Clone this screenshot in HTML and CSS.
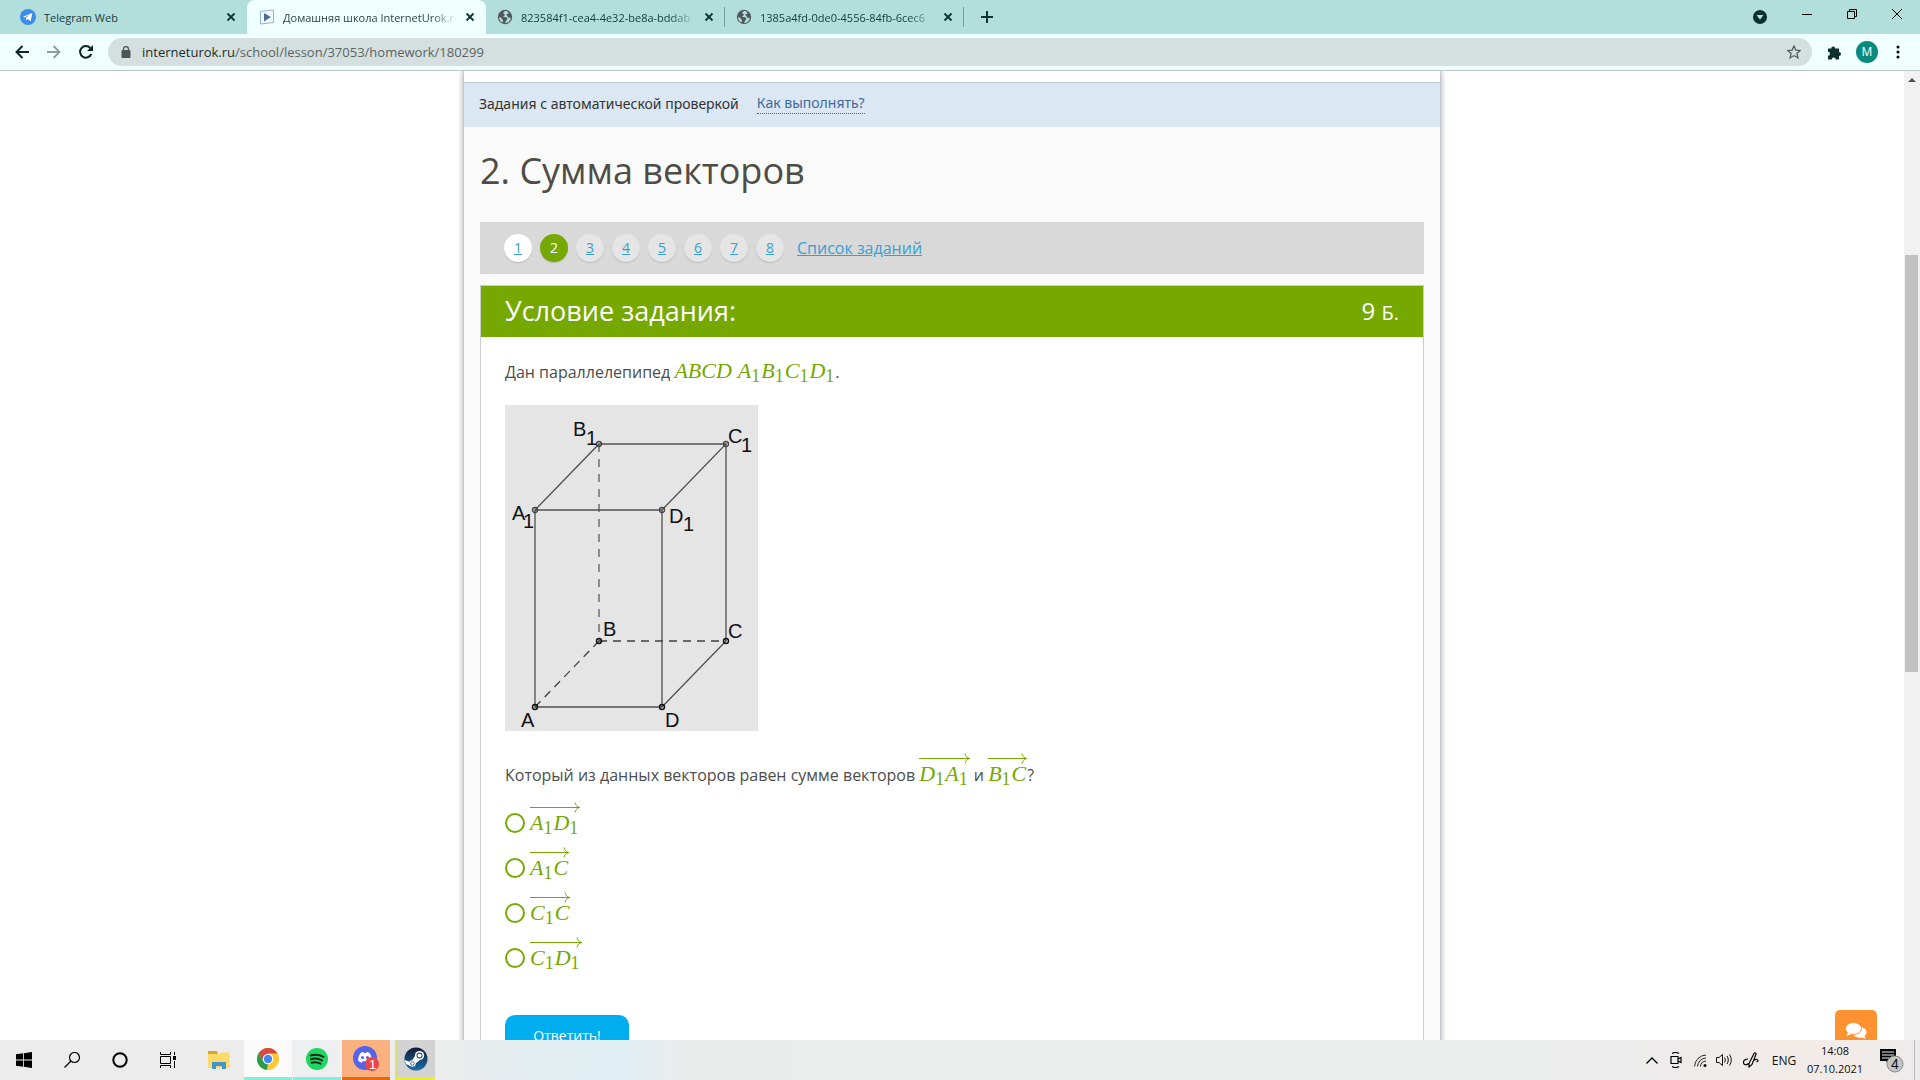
FILE: index.html
```html
<!DOCTYPE html>
<html lang="ru">
<head>
<meta charset="utf-8">
<title>Домашняя школа InternetUrok.ru</title>
<link rel="stylesheet" href="styles.css">
</head>
<body>
<svg width="0" height="0" class="defs" aria-hidden="true">
  <symbol id="close" viewBox="0 0 10 10"><path d="M1.5 1.5l7 7M8.500 1.500l-7 7" stroke="#0d3432" stroke-width="1.800" fill="none"/></symbol>
  <symbol id="globe" viewBox="0 0 16 16"><circle cx="8" cy="8" r="7.200" fill="#50585a"/><path d="M8.500 1.800c-1 1-2.500 1-2 2.400.3.900 1.500.6 1.300 1.800-.2 1-1.500.9-1.500 2 1.500.3 3.500-.3 4 1.300.3 1.200-1 1.500-1.200 2.500-.2.900-.6 1.600-1.400 2.300a6 6 0 0 0 6.200-5.300c-1-.2-1.800.4-2.700-.3-.9-.8-.3-1.700-1.200-2.100-.7-.3-.9-1 0-1.300.9-.2 1.300-.6 1.600-1.400a6 6 0 0 0-3.100-1.900zM2 8.200c1.300 0 2.300.4 2.600 1.400.3 1 1.500 1 1.300 2.200l-.2 1.700A6 6 0 0 1 2 8.200z" fill="#b2dfdc"/></symbol>
  <symbol id="head" viewBox="0 0 6 11"><path d="M1 0.500c.5 2.500 2 4.300 4.500 5-2.500.7-4 2.500-4.500 5" fill="none" stroke="#75a800"/></symbol>
</svg>

<header class="browser">
  <div class="tabs">
    <div class="tab tab-first">
      <svg class="fav" viewBox="0 0 16 16"><circle cx="8" cy="8" r="8" fill="#3b8de8"/><path d="M3 7.800l9.300-3.800-1.600 8.300-3-2.200-1.500 1.400-.3-2.400 4-3.600-5 3.100z" fill="#fff"/></svg>
      <span class="tab-name">Telegram Web</span>
      <button class="icon-btn" aria-label="Закрыть"><svg width="10" height="10"><use href="#close"/></svg></button>
    </div>
    <div class="tab tab-active">
      <svg class="fav" viewBox="0 0 16 16"><path d="M1.500 2.500l13-1.500v12.500l-13 1.500z" fill="#f6fbff" stroke="#8fb4d6"/><path d="M5 4l7 4-7 4.500z" fill="#4a6d9c"/></svg>
      <span class="tab-name fade">Домашняя школа InternetUrok.r</span>
      <button class="icon-btn" aria-label="Закрыть"><svg width="10" height="10"><use href="#close"/></svg></button>
    </div>
    <div class="tab tab-sep">
      <svg class="fav"><use href="#globe"/></svg>
      <span class="tab-name fade">823584f1-cea4-4e32-be8a-bddab</span>
      <button class="icon-btn" aria-label="Закрыть"><svg width="10" height="10"><use href="#close"/></svg></button>
    </div>
    <div class="tab tab-sep">
      <svg class="fav"><use href="#globe"/></svg>
      <span class="tab-name fade">1385a4fd-0de0-4556-84fb-6cec6</span>
      <button class="icon-btn" aria-label="Закрыть"><svg width="10" height="10"><use href="#close"/></svg></button>
    </div>
    <button class="icon-btn new-tab" aria-label="Новая вкладка"><svg width="12" height="12" viewBox="0 0 12 12"><path d="M6 0v12M0 6h12" stroke="#0d3432" stroke-width="2"/></svg></button>
    <div class="window-btns">
      <button class="icon-btn" aria-label="Поиск вкладок"><svg width="14" height="14" viewBox="0 0 14 14"><circle cx="7" cy="7" r="7" fill="#0d2f2e"/><path d="M3.500 5h7L7 9.800z" fill="#b2dfdc"/></svg></button>
      <button class="icon-btn raised" aria-label="Свернуть"><svg width="10" height="10" viewBox="0 0 10 10"><path d="M0 5.500h10" stroke="#000"/></svg></button>
      <button class="icon-btn raised" aria-label="Развернуть"><svg width="10" height="10" viewBox="0 0 10 10"><path d="M.5 2.500h7v7h-7zM2.500 2.500v-2h7v7h-2" fill="none" stroke="#000"/></svg></button>
      <button class="icon-btn raised" aria-label="Закрыть окно"><svg width="10" height="10" viewBox="0 0 10 10"><path d="M0 0l10 10M10 0L0 10" stroke="#000"/></svg></button>
    </div>
  </div>
  <div class="toolbar">
    <button class="icon-btn" aria-label="Назад"><svg width="14" height="14" viewBox="0 0 14 14"><path d="M14 7H1.500M7.500 1l-6 6 6 6" fill="none" stroke="#0d2523" stroke-width="2"/></svg></button>
    <button class="icon-btn" aria-label="Вперёд"><svg width="14" height="14" viewBox="0 0 14 14"><path d="M0 7h12.500M6.500 1l6 6-6 6" fill="none" stroke="#8d9c9b" stroke-width="1.800"/></svg></button>
    <button class="icon-btn" aria-label="Обновить"><svg width="14" height="14" viewBox="0 0 14 14"><path d="M12.300 9A5.800 5.800 0 1 1 11.300 3" fill="none" stroke="#0d2523" stroke-width="2"/><path d="M14 0v6H8z" fill="#0d2523"/></svg></button>
    <div class="address">
      <svg width="10" height="12" viewBox="0 0 10 12"><rect x="0.500" y="4" width="9" height="8" rx="1" fill="#4d5655"/><path d="M2.500 5V3a2.500 2.500 0 0 1 5 0v2" fill="none" stroke="#4d5655" stroke-width="1.300"/></svg>
      <span class="url"><b>interneturok.ru</b>/school/lesson/37053/homework/180299</span>
      <button class="icon-btn" aria-label="В закладки"><svg width="14" height="14" viewBox="0 0 14 14"><path d="M7 1l1.800 4.100 4.400.4-3.300 3 1 4.400L7 10.600l-3.900 2.300 1-4.400-3.300-3 4.400-.4z" fill="none" stroke="#4d5655" stroke-width="1.200"/></svg></button>
    </div>
    <div class="actions">
      <button class="icon-btn" aria-label="Расширения"><svg width="15" height="15" viewBox="0 0 15 15"><path d="M1 3.500h3.200a2 2 0 1 1 4 0H12v3.600a2 2 0 1 1 0 4V14.500H8.700a2 2 0 1 0-4 0H1v-3.700a2 2 0 1 0 0-4z" fill="#0d2f2e"/></svg></button>
      <button class="avatar">M</button>
      <button class="icon-btn" aria-label="Меню"><svg width="4" height="14" viewBox="0 0 4 14"><circle cx="2" cy="2" r="1.500"/><circle cx="2" cy="7" r="1.500"/><circle cx="2" cy="12" r="1.500"/></svg></button>
    </div>
  </div>
</header>

<div class="viewport">
  <main class="page">
    <div class="notice"><span>Задания с автоматической проверкой</span><a href="#">Как выполнять?</a></div>
    <h1>2. Сумма векторов</h1>
    <nav class="steps">
      <a class="step done" href="#">1</a><a class="step current" href="#">2</a><a class="step" href="#">3</a><a class="step" href="#">4</a><a class="step" href="#">5</a><a class="step" href="#">6</a><a class="step" href="#">7</a><a class="step" href="#">8</a>
      <a class="list-link" href="#">Список заданий</a>
    </nav>
    <section class="card">
      <div class="card-head"><h2>Условие задания:</h2><span class="points">9 <small>Б.</small></span></div>
      <form class="card-body">
        <p>Дан параллелепипед <i class="m">ABCD<span class="sp"></span>A<sub>1</sub>B<sub>1</sub>C<sub>1</sub>D<sub>1</sub></i>.</p>
        <svg class="figure" width="253" height="326" viewBox="0 0 253 326" role="img" aria-label="Параллелепипед">
          <rect width="253" height="326" fill="#e5e5e5"/>
          <path d="M30 105L94 39H221L157 105ZM30 105V302H157V105M157 302L221 236V39" fill="none" stroke="#505050" stroke-width="1.300"/>
          <path d="M94 39V236" fill="none" stroke="#505050" stroke-width="1.200" stroke-dasharray="8 7"/>
          <path d="M94 236H221M94 236L30 302" fill="none" stroke="#404040" stroke-width="1.300" stroke-dasharray="8 6"/>
          <g fill="none" stroke="#444" stroke-width="1.300"><circle cx="30" cy="105" r="2.500"/><circle cx="94" cy="39" r="2.500"/><circle cx="221" cy="39" r="2.500"/><circle cx="157" cy="105" r="2.500"/></g>
          <g fill="none" stroke="#111" stroke-width="1.400"><circle cx="30" cy="302" r="2.500"/><circle cx="94" cy="236" r="2.500"/><circle cx="221" cy="236" r="2.500"/><circle cx="157" cy="302" r="2.500"/></g>
          <g class="fig-text">
            <text x="68" y="31">B</text><text x="81" y="40">1</text>
            <text x="223" y="38">C</text><text x="236" y="47">1</text>
            <text x="7" y="115">A</text><text x="18" y="123">1</text>
            <text x="164" y="118">D</text><text x="178" y="126">1</text>
            <text x="98" y="231">B</text><text x="223" y="233">C</text>
            <text x="16" y="322">A</text><text x="160" y="322">D</text>
          </g>
        </svg>
        <p class="question">Который из данных векторов равен сумме векторов <span class="vec"><span class="arrow"><svg width="6" height="11"><use href="#head"/></svg></span><i class="m">D<sub>1</sub>A<sub>1</sub></i></span> и <span class="vec"><span class="arrow"><svg width="6" height="11"><use href="#head"/></svg></span><i class="m">B<sub>1</sub>C</i></span>?</p>
        <div class="options">
          <label><input type="radio" name="v"><span class="vec"><span class="arrow"><svg width="6" height="11"><use href="#head"/></svg></span><i class="m">A<sub>1</sub>D<sub>1</sub></i></span></label>
          <label><input type="radio" name="v"><span class="vec"><span class="arrow"><svg width="6" height="11"><use href="#head"/></svg></span><i class="m">A<sub>1</sub>C</i></span></label>
          <label><input type="radio" name="v"><span class="vec"><span class="arrow"><svg width="6" height="11"><use href="#head"/></svg></span><i class="m">C<sub>1</sub>C</i></span></label>
          <label><input type="radio" name="v"><span class="vec"><span class="arrow"><svg width="6" height="11"><use href="#head"/></svg></span><i class="m">C<sub>1</sub>D<sub>1</sub></i></span></label>
        </div>
        <button class="submit" type="button">Ответить!</button>
      </form>
    </section>
  </main>
  <div class="scrollbar"><svg width="16" height="17" viewBox="0 0 16 17"><path d="M4 11l4-4 4 4z" fill="#505050"/></svg><div class="thumb"></div></div>
  <button class="chat" aria-label="Чат"><svg width="22" height="18" viewBox="0 0 22 18"><path d="M14 5c5 0 7.500 2.500 7.500 5.300 0 1.500-.8 2.900-2 3.900l1.300 2.800-4-1.500c-4.500.8-8.300-1-8.800-4z" fill="#fff"/><ellipse cx="8.500" cy="6.500" rx="8" ry="6" fill="#fff" stroke="#ff9230"/><path d="M3 10l-1.500 4 5-2z" fill="#fff"/></svg></button>
</div>

<footer class="taskbar">
  <button class="task" aria-label="Пуск"><svg width="16" height="16" viewBox="0 0 16 16"><path d="M0 2.300l7-1V7.600H0zM7.800 1.200L16 0v7.600H7.800zM0 8.400h7v6.300l-7-1zM7.800 8.400H16V16l-8.200-1.200z"/></svg></button>
  <button class="task" aria-label="Поиск"><svg width="16" height="16" viewBox="0 0 16 16"><circle cx="10.500" cy="5.500" r="5" fill="none" stroke="#000" stroke-width="1.200"/><path d="M7 9L.5 15.500" stroke="#000" stroke-width="1.300"/></svg></button>
  <button class="task" aria-label="Кортана"><svg width="16" height="16" viewBox="0 0 16 16"><circle cx="8" cy="8" r="6.700" fill="none" stroke="#000" stroke-width="2"/></svg></button>
  <button class="task" aria-label="Представление задач"><svg width="16" height="16" viewBox="0 0 16 16"><path d="M.5 0v2.500h10V0M.5 16v-2.500h10V16M.5 4.500h10v7H.5zM14.500 0v3M14.500 9v7" fill="none" stroke="#000"/><path d="M13 4h3v4h-3z"/></svg></button>
  <div class="pinned">
    <button class="task" aria-label="Проводник"><svg width="22" height="18" viewBox="0 0 22 18"><path d="M0 0h9l1 3H0z" fill="#d8a72d"/><path d="M0 3h11l2-1.500h8.500V17H0z" fill="#ffd969"/><path d="M4 18v-7h14v7h-4v-3H8v3z" fill="#3f93cf"/></svg></button>
    <button class="task t-chrome" aria-label="Chrome"><svg width="22" height="22" viewBox="0 0 22 22"><circle cx="11" cy="11" r="11" fill="#fcc934"/><path d="M11 11L6.700 13.500 1.500 5.500A11 11 0 0 1 20.500 5.500H11z" fill="#d34a3f"/><path d="M1.500 5.500l5.200 8L11 16l-1.200 6A11 11 0 0 1 1.500 5.500z" fill="#2a9d50"/><circle cx="11" cy="11" r="5.300" fill="#fff"/><circle cx="11" cy="11" r="4.200" fill="#4285f4"/></svg></button>
    <button class="task t-spotify" aria-label="Spotify"><svg width="22" height="22" viewBox="0 0 22 22"><circle cx="11" cy="11" r="11" fill="#1ed760"/><path d="M4.500 7.500c4.500-1.300 9-.9 13 1.300M5 11.200c4-1.200 7.700-.7 11 1.200M5.500 14.700c3.200-.9 6.300-.5 9 1" fill="none" stroke="#10291a" stroke-width="2" stroke-linecap="round"/></svg></button>
    <button class="task t-discord" aria-label="Discord"><svg width="26" height="25" viewBox="0 0 26 25"><circle cx="12" cy="12" r="12" fill="#5562ea"/><path d="M7.500 7c1-.5 2-.8 3-.9l.5.900h2l.5-.900c1 .1 2 .4 3 .9 1.700 2.500 2.500 5 2.200 8-1.200.9-2.300 1.400-3.500 1.700l-.9-1.500H9.700l-.9 1.500c-1.200-.3-2.300-.8-3.500-1.700-.3-3 .5-5.500 2.200-8z" fill="#fff"/><circle cx="9.500" cy="11.500" r="1.500" fill="#5562ea"/><circle cx="14.500" cy="11.500" r="1.500" fill="#5562ea"/><circle cx="19" cy="18" r="7" fill="#ef4444"/><text x="16" y="23" class="badge-text">1</text></svg></button>
    <button class="task t-steam" aria-label="Steam"><svg width="24" height="24" viewBox="0 0 24 24"><defs><linearGradient id="st" x1="0" y1="0" x2="0" y2="1"><stop offset="0" stop-color="#131a3a"/><stop offset="1" stop-color="#1c6ea4"/></linearGradient></defs><circle cx="12" cy="12" r="11.500" fill="url(#st)"/><circle cx="15.500" cy="8.500" r="4.600" fill="#fff"/><circle cx="15.500" cy="8.500" r="3" fill="#1a3157"/><circle cx="15.500" cy="8.500" r="2.100" fill="#fff"/><path d="M11 9l-3 4.500 3.500 3L16 13z" fill="#fff"/><path d="M0.700 13l7 2.500-1.500 3.500L2 17z" fill="#fff"/><circle cx="8.500" cy="16.500" r="3.300" fill="#fff"/><circle cx="8.500" cy="16.500" r="1.800" fill="none" stroke="#1a4a78" stroke-width=".8"/></svg></button>
  </div>
  <div class="tray">
    <button class="icon-btn w24" aria-label="Скрытые значки"><svg width="12" height="7" viewBox="0 0 12 7"><path d="M.5 6.500L6 1l5.500 5.500" fill="none" stroke="#000" stroke-width="1.300"/></svg></button>
    <button class="icon-btn w24" aria-label="Камера"><svg width="12" height="16" viewBox="0 0 12 16"><path d="M1 4.500h7v7H1zM8 7l3-1.500v5L8 9M2 1.500C4 .2 7 .2 9 1.500M2 14.500c2 1.300 5 1.300 7 0" fill="none" stroke="#000" stroke-width="1.200"/></svg></button>
    <button class="icon-btn w24" aria-label="Сеть"><svg width="13" height="13" viewBox="0 0 13 13"><g fill="none" stroke="#222"><path d="M.5 12.500A12 12 0 0 1 12 1M3.500 12.500A9 9 0 0 1 12 4M6.500 12.500A6 6 0 0 1 12 7"/></g><circle cx="11" cy="11.500" r="1.500"/></svg></button>
    <button class="icon-btn w24" aria-label="Звук"><svg width="16" height="14" viewBox="0 0 16 14"><path d="M.5 4.500h2.500l3.500-3v11L3 9.500H.5zM8.500 4.500c1 1.500 1 3.500 0 5M11 3c1.700 2.500 1.700 5.500 0 8M13.500 1.500c2.300 3.500 2.300 7.500 0 11" fill="none" stroke="#111"/></svg></button>
    <button class="icon-btn w30" aria-label="Перо"><svg width="16" height="16" viewBox="0 0 16 16"><path d="M6 11.500L11 1.500c.6-1 2.300-.5 2 .8L9 12.500l-3 2.500zM5 7C2 7 0 9 .5 11s3 2.500 5 .5M9.500 10c1.500-2 3-3 4.500-2.500 1.500.7 1 2.500-.5 2" fill="none" stroke="#000" stroke-width="1.200"/></svg></button>
    <span class="lang">ENG</span>
    <div class="clock"><span>14:08</span><span>07.10.2021</span></div>
    <button class="icon-btn notif" aria-label="Уведомления"><svg width="26" height="26" viewBox="0 0 26 26"><path d="M1 2h16v12H11v4l-4-4H1z"/><path d="M3 5h12M3 8h12M3 11h8" stroke="#eee"/><circle cx="16" cy="17" r="8" fill="#c4c4c4" stroke="#8c8c8c"/><text x="12" y="22" class="badge-text dark">4</text></svg></button>
    <span class="edge"></span>
  </div>
</footer>
</body>
</html>
```
FILE: styles.css
```css
* { box-sizing: border-box; }
html, body { height: 100%; }
body {
  margin: 0;
  display: flex;
  flex-direction: column;
  overflow: hidden;
  background: #fff;
  font-family: "Open Sans", "Noto Sans", sans-serif;
  color: #4d4d4d;
}
.defs { position: absolute; }
button { font: inherit; border: 0; padding: 0; background: none; cursor: pointer; }
svg { display: block; flex: none; }
.icon-btn { display: flex; align-items: center; justify-content: center; flex: none; }

/* Browser window */
.browser { flex: none; background: #b2dfdc; }
.tabs { display: flex; height: 34px; font-size: 11px; color: #14403d; }
.tab { display: flex; align-items: center; gap: 8px; width: 239px; padding: 0 11px; }
.tab-first { width: 247px; padding-left: 20px; }
.tab-active { padding-left: 12px; background: #f0ffff; border-radius: 8px 8px 0 0; color: #2b4644; }
.tab-sep { background: linear-gradient(#6fa09d, #6fa09d) right center / 1px 20px no-repeat; }
.fav { width: 16px; height: 16px; }
.tab-name { flex: 1; overflow: hidden; white-space: nowrap; }
.fade { -webkit-mask-image: linear-gradient(to right, #000 85%, transparent); mask-image: linear-gradient(to right, #000 85%, transparent); }
.new-tab { margin-left: 17px; }
.window-btns { display: flex; gap: 35px; align-items: center; margin-left: auto; padding-right: 18px; }
.raised { padding-bottom: 6px; }
.toolbar { display: flex; align-items: center; gap: 18px; height: 37px; padding: 0 20px 0 15px; background: #f0ffff; border-bottom: 1px solid #b5c9c8; }
.address { flex: 1; display: flex; align-items: center; gap: 11px; height: 28px; padding: 0 11px 0 13px; margin: 0 -3px; border-radius: 14px; background: #d5dfdf; color: #5a6463; font-size: 13px; }
.url { flex: 1; }
.url b { font-weight: 400; color: #16302e; }
.actions { display: flex; align-items: center; gap: 14px; }
.actions .icon-btn:last-child { margin-left: 4px; }
.avatar { width: 22px; height: 22px; border-radius: 50%; background: #0a8a7a; color: #fff; font-size: 12px; line-height: 22px; }

/* Lesson page */
.viewport { flex: 1; min-height: 0; position: relative; display: flex; overflow: hidden; }
.page {
  width: 978px;
  min-height: 100%;
  height: max-content;
  margin: 0 auto;
  padding-top: 11px;
  background: linear-gradient(#fff 11px, #fafafa 11px);
  border: 1px solid #c4c8d0;
  border-width: 0 1px;
  box-shadow: 0 0 6px rgba(0, 0, 0, .35);
}
.notice { display: flex; align-items: center; gap: 18px; height: 45px; padding: 0 15px 3px; border-top: 1px solid #c0cbd2; background: #dbe8f4; color: #333; font-family: "Noto Sans", sans-serif; font-size: 14px; }
.notice a { color: #41699c; line-height: 20px; text-decoration: none; border-bottom: 1px dotted #41699c; }
h1 { margin: 20px 16px 27px; font-size: 36px; line-height: 48px; font-weight: 400; color: #4d4d45; }
.steps { display: flex; align-items: center; gap: 8px; height: 52px; margin: 0 16px; padding: 0 24px; background: #d9d9d9; }
.step { width: 28px; height: 28px; border-radius: 50%; background: #e5e5e5; box-shadow: 0 1px 1px rgba(0, 0, 0, .15); font-size: 14px; line-height: 28px; text-align: center; color: #37a0d0; }
.done { background: #fff; }
.current { background: #75a800; color: #fff; text-decoration: none; }
.list-link { margin-left: 5px; font-size: 16px; color: #37a0d0; }
.card { margin: 11px 16px 0; border: 1px solid #ccc; background: #fff; }
.card-head { display: flex; align-items: center; justify-content: space-between; height: 51px; padding: 0 24px 2px; background: #75a800; color: #fff; }
h2 { margin: 0; font-size: 27px; font-weight: 400; }
.points { font-size: 24px; }
.points small { font-size: 20px; }
.card-body { padding: 20px 24px 40px; font-size: 16px; line-height: 30px; }
p { margin: 0; }
.m { font-family: "Liberation Serif", serif; font-size: 22px; line-height: 26px; color: #75a800; }
.m sub { margin: 0 1px 0 0; font-size: 18px; font-style: normal; line-height: 0; vertical-align: -4px; }
.sp { display: inline-block; width: 6px; }
.figure { margin: 18px 0 22px; }
.fig-text { font-family: "Liberation Sans", sans-serif; font-size: 20px; fill: #111; }
.vec { display: inline-block; }
.arrow { display: flex; justify-content: flex-end; height: 11px; margin-bottom: -3px; background: linear-gradient(#75a800, #75a800) center / 100% 1px no-repeat; }
.vec .m { display: block; padding: 0 1px 0 0; }
.options { display: flex; flex-direction: column; margin-top: 10px; }
.options label { display: flex; align-items: center; gap: 5px; height: 45px; }
.options .vec { padding-bottom: 8px; }
.options input { appearance: none; width: 20px; height: 20px; margin: 0; border: 2px solid #75a800; border-radius: 50%; background: #fff; }
.submit { width: 124px; height: 42px; margin-top: 35px; border-radius: 10px; background: #00aeef; color: #fff; font-family: "Open Sans", sans-serif; font-size: 14px; }
.scrollbar { flex: none; width: 16px; background: #f1f1f1; }
.thumb { height: 43%; margin: 167px 2px 0 1px; background: #c1c1c1; }
.chat { position: absolute; right: 43px; bottom: -12px; width: 42px; height: 42px; border-radius: 5px; background: #ff9230; display: flex; align-items: center; justify-content: center; }

/* Windows taskbar */
.taskbar { flex: none; display: flex; height: 40px; background: linear-gradient(90deg, #ececec 440px, #e4ecef 520px, #deeef3 620px, #eaecec 680px, #ececec 85%, #f3ebe7 96%, #ececec); color: #111; font-size: 12px; }
.task { display: flex; align-items: center; justify-content: center; width: 48px; height: 40px; }
.pinned { display: flex; gap: 1px; margin-left: 3px; }
.t-chrome { background: #fafafa; border-bottom: 3px solid #84eedd; }
.t-spotify { background: #eeeff0; border-bottom: 3px solid #84eedd; }
.t-discord { background: #fbb080; border-bottom: 3px solid #e8680c; }
.t-steam { width: 40px; margin-left: 4px; background: #d3d3d3; border-bottom: 3px solid #eded28; border-left: 2px solid #dede7a; }
.badge-text { font-family: "Liberation Sans", sans-serif; font-size: 13px; fill: #fff; }
.dark { font-size: 14px; fill: #111; }
.tray { display: flex; align-items: center; margin-left: auto; }
.w24 { width: 24px; }
.w30 { width: 30px; }
.lang { width: 36px; text-align: center; }
.clock { display: flex; flex-direction: column; width: 66px; line-height: 18px; font-size: 11px; text-align: center; }
.notif { width: 46px; padding-left: 2px; }
.edge { width: 1px; height: 40px; margin-right: 5px; background: #b5b5b5; }
```
